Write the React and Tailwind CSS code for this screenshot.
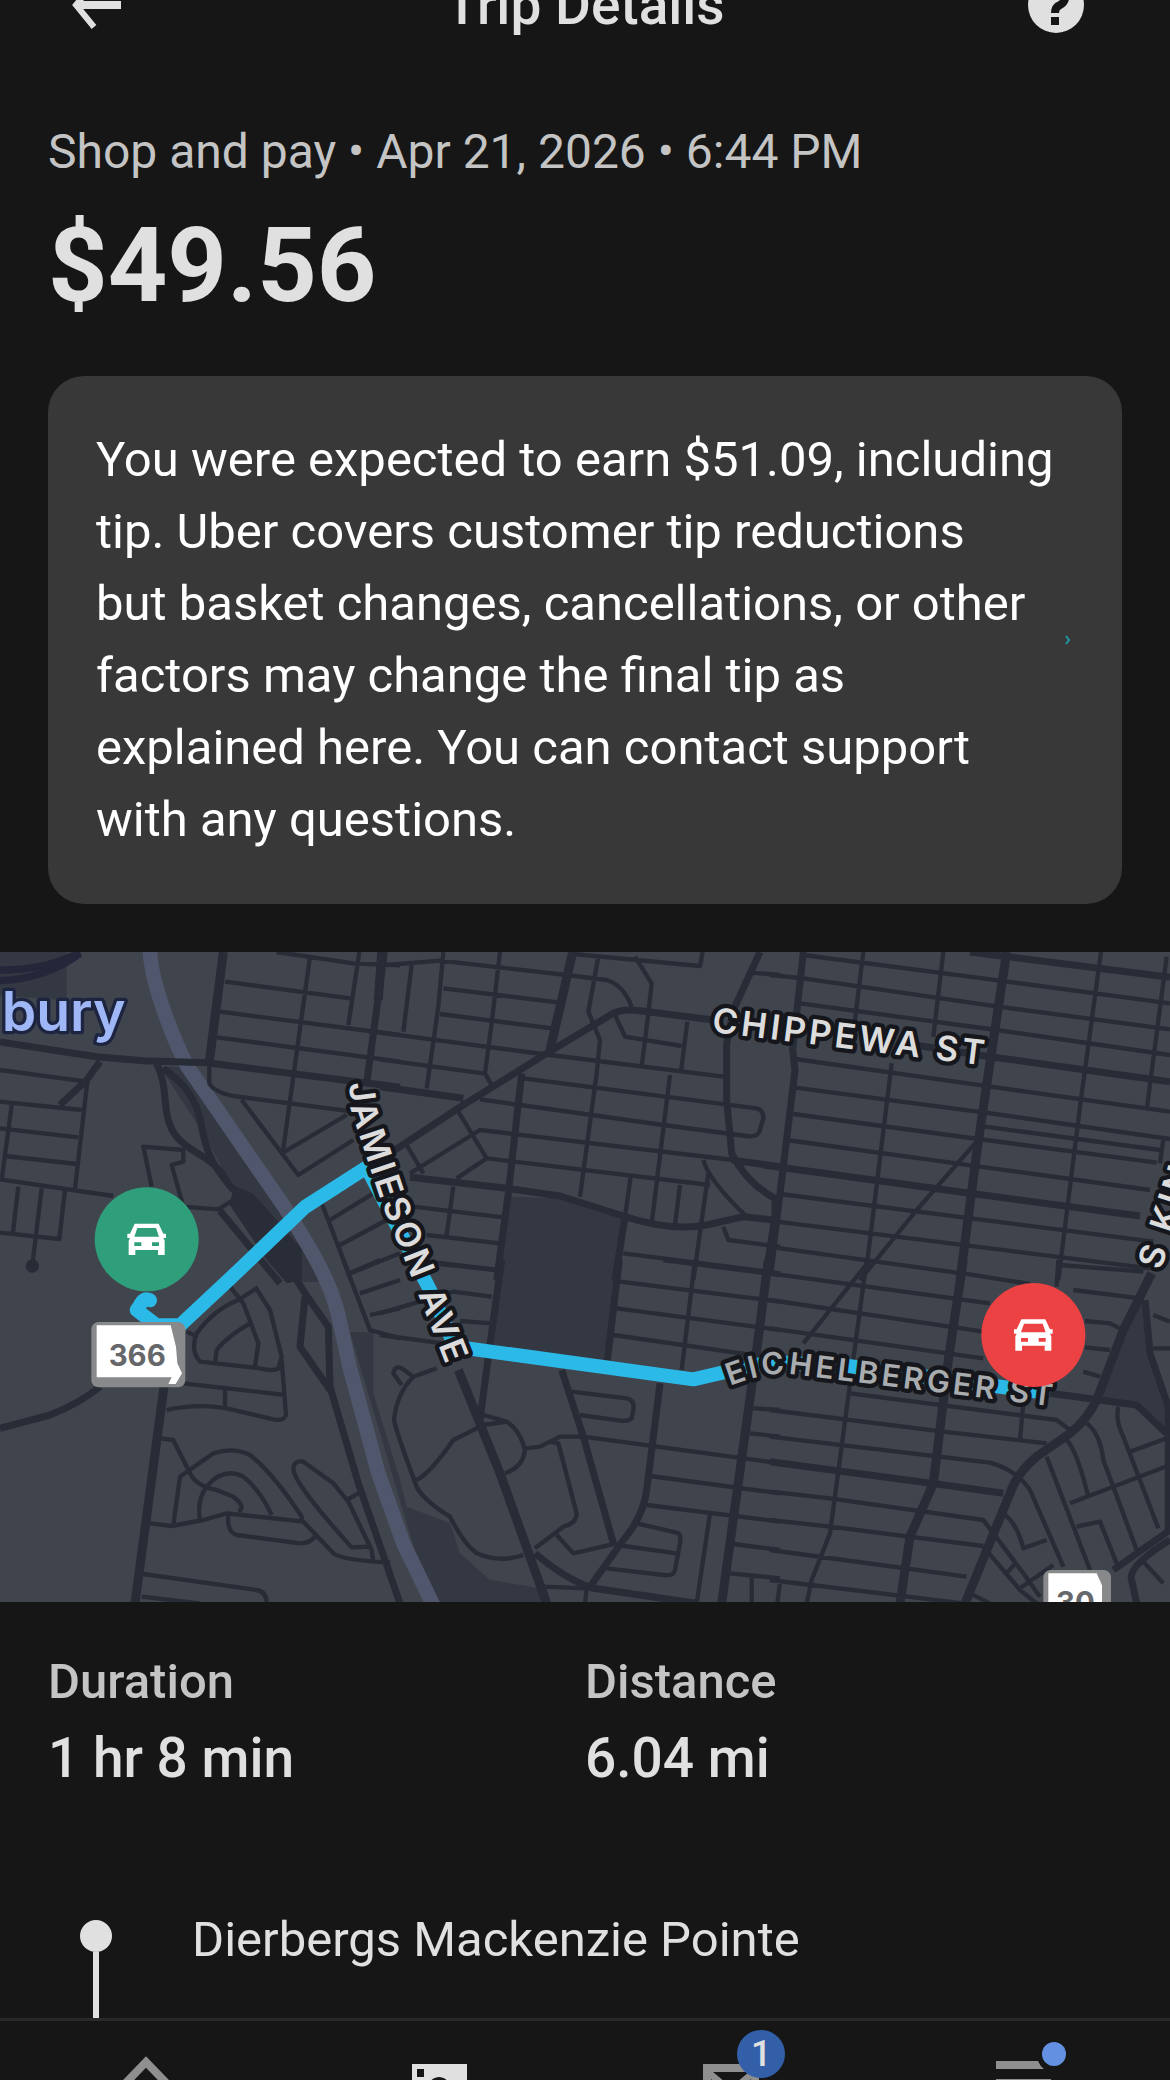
const tiles = [
  {
    x: 0,
    y: -36,
    minor:
      "M628 360 V430 Q640 455 700 468 L1060 515 M930 50 L848 640 M830 36 L1060 70 L1200 76 M1078 36 L1045 255 M675 125 L1050 175 M660 215 L1200 285 M650 292 L1200 365 M725 480 L895 705 L1060 600 M845 640 L1040 525 M965 790 L1050 1010 M990 840 L1120 760 M1020 915 L1160 840 M1050 1000 L1200 940 M0 390 L260 425 M0 485 L245 510 M262 425 L225 745 M35 495 L5 720 M0 565 L235 592 M15 648 L230 672 M0 718 L340 768 M55 740 L38 885 M125 745 L97 975 M195 750 L178 897 L0 878 M455 740 L430 620 L550 630 V665 L515 675 L550 800 L655 808 L700 780",
    major:
      "M0 306 L290 350 L430 362 L620 368 L1200 442 M1153 36 L1100 430 M300 365 L260 420 L180 495 M470 370 C510 450 480 530 530 590 S640 640 690 740 M490 385 C550 430 590 470 605 560 S650 690 700 750 M660 812 L840 1030",
    wide: "M670 36 L628 365",
  },
  {
    x: 1140,
    y: -36,
    minor:
      "M20 75 L180 62 L560 105 L680 120 Q730 135 755 200 M95 75 L70 275 M190 36 L175 200 L140 445 M360 36 L335 250 L315 400 L335 435 M190 145 L540 188 M180 222 L515 265 M0 278 L510 345 L1030 410 M0 358 L310 400 M655 50 L625 215 L660 300 L650 400 L600 770 M580 42 L960 78 L968 36 M765 50 L815 130 L805 220 L785 380 M705 225 L735 290 L905 318 M922 245 L903 395 M430 415 L1130 505 Q1150 510 1150 535 L1138 575 Q1130 592 1100 588 L850 555 L300 478 M870 405 L815 850 M90 700 L300 570 L1060 660 M235 515 L320 655 M230 715 L320 655 L990 735 M80 615 L130 700 M970 660 Q985 720 1100 830 M985 700 L940 1020 M752 710 L735 830 M900 735 L885 855 M220 740 L200 885 M100 800 L370 832 M140 885 L360 910 M170 968 L350 990 M1115 98 L1200 105 M1030 860 L1045 900 L1200 920 M730 940 L1200 1000",
    major:
      "M0 440 L250 475 M0 655 L60 620 L250 495 L500 340 L700 220 Q730 205 780 212 L1000 240 M425 400 L385 760 L350 1020 M90 712 L380 745 L540 768 L730 828 Q870 875 980 855 L1090 830 L1180 840 M735 830 L705 1020 M1140 36 L1060 210 L1040 310 V480 L1055 640 Q1100 730 1185 775 V830 L1155 1020 M1055 660 L1200 680",
    wide: "M578 36 L545 180 L510 330 M5 36 L-5 180",
  },
  {
    x: 2310,
    y: -36,
    minor:
      "M280 36 L255 240 M365 370 L290 980 M520 36 L490 290 M993 36 L930 500 L865 1020 M1190 50 L1130 510 M100 45 L690 122 L1200 190 M0 105 L100 115 L685 200 L1200 268 M90 190 L680 270 L1200 345 M75 357 L640 437 L1200 515 M75 443 L640 517 L1200 597 M645 560 L1170 630 M70 522 L625 597 L1160 668 M50 600 L1140 750 M30 762 L1150 905 M20 845 L1140 985 M10 922 L575 1000 M1180 597 L1170 670 M615 610 L440 810 L270 1020",
    major:
      "M100 36 L68 330 L75 390 L40 680 L0 1000 M600 36 L1200 112 M400 310 L660 350 L1200 425 M-20 675 L600 760 L1110 828",
    wide: "M710 36 L655 400 L620 640 L570 1020",
  },
  {
    x: 0,
    y: 924,
    minor:
      "M690 80 L730 130 L775 250 L765 320 M765 80 L810 150 L845 290 L835 325 Q820 335 780 325 L600 305 Q570 270 590 220 Q640 150 715 120 L770 85 M750 190 Q680 230 650 270 L645 310 M550 370 L855 405 M845 300 L858 465 Q850 485 820 478 L680 445 Q590 430 500 450 M675 390 V440 M560 215 L590 230 M480 535 L520 540 L570 640 Q590 680 650 690 L700 710 Q740 740 715 755 M520 795 L540 650 L640 580 Q700 560 750 585 Q820 640 905 770 V785 M600 780 Q590 720 620 680 Q670 620 730 650 Q780 690 815 765 M450 790 L515 798 L610 780 L680 760 L910 785 L1000 880 Q1020 900 1170 908 M685 765 Q680 815 710 825 L900 850 Q930 850 945 830 M880 630 Q880 600 910 605 L1000 670 L1045 725 L1115 870 L1120 905 M880 630 Q890 680 1055 862 L1110 860 M1040 720 L1075 700 M430 942 L770 990 Q800 995 800 1030 M425 1010 L600 1030 M1030 0 L1110 210 L1200 235 M1050 40 L1140 0 M1080 100 L1200 60 M1110 165 L1200 145",
    major:
      "M0 505 L150 465 Q240 430 300 380 M890 60 L915 100 L985 200 L990 380 L1075 670 L1200 1030 M915 110 L900 260 L990 390",
    wide: "M492 380 L405 1030",
  },
  {
    x: 1140,
    y: 924,
    minor:
      "M170 325 L100 350 Q50 400 42 480 Q50 520 110 680 Q130 720 210 770 Q250 850 290 880 Q360 910 430 885 M65 375 L40 340 Q45 315 65 325 L100 350 M110 660 Q150 640 220 540 L310 495 L380 485 Q420 510 435 570 Q430 620 375 640 M310 465 L380 485 M435 565 L480 560 L540 530 H610 M510 545 L535 550 L590 760 Q590 790 550 800 L465 865 M610 530 L1200 610 M575 395 L740 415 Q765 420 760 450 L755 475 Q745 485 720 482 L600 465 M530 825 L580 880 L710 850 M490 980 L620 985 L615 1030 M810 648 L1200 700 M800 735 L1200 785 M770 790 L890 818 Q905 820 900 850 L885 930 Q880 950 850 945 L680 925 M710 855 L890 880 M990 760 L950 1030 M945 0 L905 330 M850 0 L1200 45 M720 65 L1200 125 M710 145 L1200 210 M700 225 L1150 290 M180 12 L350 30 M0 160 L220 95 L335 110 M240 183 L335 190 M0 225 L190 250 M1120 445 L1200 450 M1110 520 L1200 530 M1060 852 L1200 870 M1050 940 L1200 955 M1115 945 V1030 M0 905 L30 910",
    major:
      "M365 0 L325 290 L300 480 M718 0 L682 300 M545 330 L610 530 L700 850 M840 370 L800 690 Q790 770 730 840 L630 980 M465 880 Q560 960 640 985 L950 1030",
    wide: "M235 330 L360 640 L500 1030 M1165 0 L1130 270 L1025 1030",
  },
  {
    x: 2310,
    y: 924,
    minor:
      "M290 0 L255 260 L180 820 L125 960 L110 1030 M865 0 L860 80 M300 0 L100 250 M0 40 L660 130 M580 40 L780 72 M870 15 L1120 35 M0 120 L640 215 M0 205 L640 295 M910 90 L1110 115 M945 183 L1020 190 L1050 205 M945 262 L1020 270 M940 335 L990 350 M240 400 L860 480 L900 510 M0 450 L520 515 L830 550 M0 530 L660 608 Q740 630 780 690 L880 920 M0 695 L180 715 L640 780 L760 940 L810 1010 M0 780 L180 800 L640 858 M0 870 L590 950 M0 960 L580 1030 M760 430 L750 540 M1045 440 Q1035 480 1060 530 L1165 805 M950 490 Q990 520 1000 600 L1100 870 M890 540 Q920 570 955 710 M830 590 L960 930 M1080 575 L1190 535 M900 730 L1200 615 M920 800 L990 785 L1040 910 M705 765 Q740 790 760 865 L830 840 M640 860 L750 990 L800 1030 M710 940 L740 905 M750 985 L850 915 M30 965 L22 1030 M600 1000 L660 1030 M1150 165 L1200 185 M1150 265 H1200 M1120 905 L1180 970",
    major:
      "M840 400 L1100 435 L1190 520 M0 605 L500 672 L700 700 M1125 120 L1140 280 L1195 440 V820 M1200 810 L1030 930 M1200 840 Q1070 920 1085 960 L1100 1030",
    wide: "M580 0 L535 300 L490 670 L420 830 L390 1030 M1145 40 L1060 210 L980 420 Q950 480 900 520 L800 590 Q740 640 720 700 L585 1030",
  },
];

function CarPin({ x, y, className }) {
  return (
    <g transform={`translate(${x} ${y})`}>
      <circle r="156" className={className} />
      <path
        fillRule="evenodd"
        className="fill-white"
        d="M-36 -47H36L50 -17H58V-4H50L54 4V47H34V32H-34V47H-54V4L-50 -4H-58V-17H-50ZM-28 -34L-37 -8H37L28 -34ZM-37 9V20H-16V9ZM16 9V20H37V9Z"
      />
    </g>
  );
}

function RouteMap() {
  return (
    <svg viewBox="0 0 3510 1950" className="block w-full bg-[#40444d]" role="img" aria-label="Trip route">
      {/* parks and river banks */}
      <g className="fill-[#343843]">
        <path d="M0 0H200V145L0 130Z" />
        <path d="M480 344H545L830 760L960 990L905 990L700 710L620 560Z" />
        <path d="M1530 734L1680 739L1870 799L1822 1224L1475 1184Z" />
        <path d="M1050 1140H1120V1324L1200 1584L1220 1664L1350 1714L1380 1804L1470 1884L1630 1910L1640 1950H1290Z" />
        <path d="M3420 1044L3440 1064L3450 1204L3510 1364V1444L3410 1354L3290 1344Z" />
      </g>
      <path d="M700 700L760 725L905 890L905 984L860 994L800 924L690 760Z" className="fill-[#292d38]" />
      <path
        d="M450 0C455 100 520 260 560 340L850 760C920 870 990 980 1015 1090L1050 1250L1092 1404L1135 1564L1210 1774L1300 1960"
        className="fill-none stroke-[#50566b] stroke-[44]"
      />

      <g className="fill-none stroke-[#282c37]" strokeLinejoin="round">
        {tiles.map((t) => (
          <g key={`${t.x}-${t.y}`} transform={`translate(${t.x} ${t.y})`}>
            <path d={t.minor} className="stroke-[13]" />
            <path d={t.major} className="stroke-[21]" />
            <path d={t.wide} className="stroke-[27]" />
          </g>
        ))}
      </g>
      <path d="M0 54Q140 55 240 0M0 86Q140 80 240 4" className="fill-none stroke-[#24273a] stroke-[22]" />
      <circle cx="97" cy="942" r="20" className="fill-[#282c37]" />

      {/* driven route */}
      <g className="fill-none stroke-[#2bb9e8] stroke-[42]" strokeLinejoin="round">
        <path
          strokeLinecap="round"
          d="M450 1045Q430 1035 420 1060L410 1074L470 1120L540 1120L690 980L915 765L1100 646"
        />
        <path d="M1100 646L1290 1014L1365 1184L2080 1282L2180 1259L2310 1230L2545 1242L3110 1319" />
      </g>

      <defs>
        <path id="jamieson" d="M1046 394L1058 490L1142 745L1202 894L1370 1320" />
        <path id="eichelberger" d="M2190 1302Q2290 1262 2360 1265L3180 1366" />
      </defs>
      <g
        className="fill-[#dcdcdc] stroke-[#15171c] stroke-[26] font-['Inter',sans-serif] text-[104px] font-semibold tracking-widest"
        strokeLinejoin="round"
        paintOrder="stroke"
      >
        <text transform="translate(2134 240) rotate(7)">CHIPPEWA ST</text>
        <text>
          <textPath href="#jamieson">JAMIESON AVE</textPath>
        </text>
        <text className="fill-[#a9acae] text-[92px]">
          <textPath href="#eichelberger">EICHELBERGER ST</textPath>
        </text>
        <text transform="translate(3482 956) rotate(-72)">S KIN</text>
      </g>
      <text
        x="5"
        y="238"
        className="fill-[#9fb6f7] stroke-[#1c2440] stroke-[20] font-['Inter',sans-serif] text-[166px] font-semibold"
        strokeLinejoin="round"
        paintOrder="stroke"
      >
        bury
      </text>

      <g className="font-['Inter',sans-serif] text-[88px] font-bold">
        <rect x="274" y="1110" width="282" height="196" rx="22" className="fill-[#88898b]" />
        <path d="M290 1120H512L528 1184L532 1234L546 1264L527 1296H505L515 1276H290Z" className="fill-white" />
        <text x="326" y="1241" className="fill-[#66676a]">366</text>
        <rect x="3130" y="1854" width="203" height="140" rx="22" className="fill-[#88898b]" />
        <path d="M3145 1864H3290L3306 1900V1960H3145Z" className="fill-white" />
        <text x="3168" y="1982" className="fill-[#66676a]">30</text>
      </g>

      <CarPin x={440} y={862} className="fill-[#2e9e7b]" />
      <CarPin x={3100} y={1149} className="fill-[#ec4243]" />
    </svg>
  );
}

function Stat({ label, value }) {
  return (
    <div>
      <dt className="text-[49px] leading-[72px] font-medium text-[#c4c4c4]">{label}</dt>
      <dd className="text-[55px] leading-[80px] font-medium text-[#e0e0e0]">{value}</dd>
    </div>
  );
}

export default function App() {
  return (
    <div className="h-screen flex flex-col overflow-hidden bg-[#161616] font-['Roboto',sans-serif] text-[#e0e0e0]">
      <header className="-mt-[51px] h-28 shrink-0 flex items-center justify-between px-[68px]">
        <button type="button" aria-label="Back" className="w-[74px]">
          <svg viewBox="0 0 56 56" className="size-14 fill-none stroke-[#e0e0e0]">
            <path d="M53 28H8" className="stroke-8" />
            <path d="M26 6L8 28L26 50" className="stroke-6" />
          </svg>
        </button>
        <h1 className="text-[55px] font-medium">Trip Details</h1>
        <button type="button" aria-label="Help" className="w-[74px]">
          <svg viewBox="0 0 56 56" className="size-14">
            <circle cx="28" cy="28" r="28" className="fill-[#e0e0e0]" />
            <path d="M18 22Q18 14 28 14T37 21Q37 25 32 28Q27 30 27 36" className="fill-none stroke-[#161616] stroke-8" />
            <rect x="23" y="40" width="8" height="8" className="fill-[#161616]" />
          </svg>
        </button>
      </header>

      <main className="flex-1 min-h-0 overflow-hidden">
        <section className="px-12 pt-[55px] pb-12">
          <p className="text-[48px] leading-[72px] text-[#c4c4c4]">Shop and pay • Apr 21, 2026 • 6:44 PM</p>
          <p className="mt-4 text-[104px] leading-[124px] font-bold">$49.56</p>
          <a href="#tips" className="mt-12 flex items-center rounded-[36px] bg-[#383838] p-12 text-white">
            <p className="flex-1 text-[49px] leading-[72px]">
              You were expected to earn $51.09, including
              <br />
              tip. Uber covers customer tip reductions
              <br />
              but basket changes, cancellations, or other
              <br />
              factors may change the final tip as
              <br />
              explained here. You can contact support
              <br />
              with any questions.
            </p>
            <svg viewBox="0 0 12 12" className="size-3 fill-none stroke-[#1f9aa0] stroke-2">
              <path d="M4 2L7 6L4 10" />
            </svg>
          </a>
        </section>

        <RouteMap />

        <dl className="grid grid-cols-2 px-12 pt-11">
          <Stat label="Duration" value="1 hr 8 min" />
          <Stat label="Distance" value="6.04 mi" />
        </dl>

        <ul className="px-12 pt-24">
          <li className="flex gap-12">
            <div className="w-24 flex flex-col items-center pt-[26px]">
              <span className="size-8 rounded-full bg-[#e0e0e0]" />
              <span className="h-40 w-[6px] bg-[#e0e0e0]" />
            </div>
            <p className="text-[49px] leading-[72px] pt-[10px]">Dierbergs Mackenzie Pointe</p>
          </li>
        </ul>
      </main>

      <nav className="h-[62px] shrink-0 overflow-hidden border-t-3 border-[#292929] grid grid-cols-4 justify-items-center pt-8">
        <a href="#home" aria-label="Home">
          <svg viewBox="0 0 72 72" className="size-18 fill-none stroke-[#8f8f8f] stroke-8">
            <path d="M8 38L36 9L64 38V68H8Z" />
          </svg>
        </a>
        <a href="#earnings" aria-label="Earnings">
          <svg viewBox="0 0 72 72" className="size-18">
            <path
              fillRule="evenodd"
              className="fill-[#e0e0e0]"
              d="M9 11H64V66H9ZM14 16V24H21V16ZM36 24A11 11 0 1 0 36.1 24Z"
            />
          </svg>
        </a>
        <a href="#inbox" aria-label="Inbox" className="relative">
          <svg viewBox="0 0 72 72" className="size-18">
            <path
              fillRule="evenodd"
              className="fill-[#8f8f8f]"
              d="M8 11H64V62H8ZM18 19L36 34L54 19ZM16 26V54H56V26L36 43Z"
            />
          </svg>
          <span className="absolute -top-[23px] left-[42px] size-12 rounded-full bg-[#335fa8] text-center text-[36px] leading-12 font-medium">
            1
          </span>
        </a>
        <a href="#menu" aria-label="Menu" className="relative">
          <svg viewBox="0 0 72 72" className="size-18 fill-[#8f8f8f]">
            <path d="M8 8H50Q52 13 56 16H8ZM8 26H63V34H8ZM8 44H63V52H8Z" />
          </svg>
          <span className="absolute -top-[11px] left-[54px] size-6 rounded-full bg-[#6390e0]" />
        </a>
      </nav>
    </div>
  );
}
